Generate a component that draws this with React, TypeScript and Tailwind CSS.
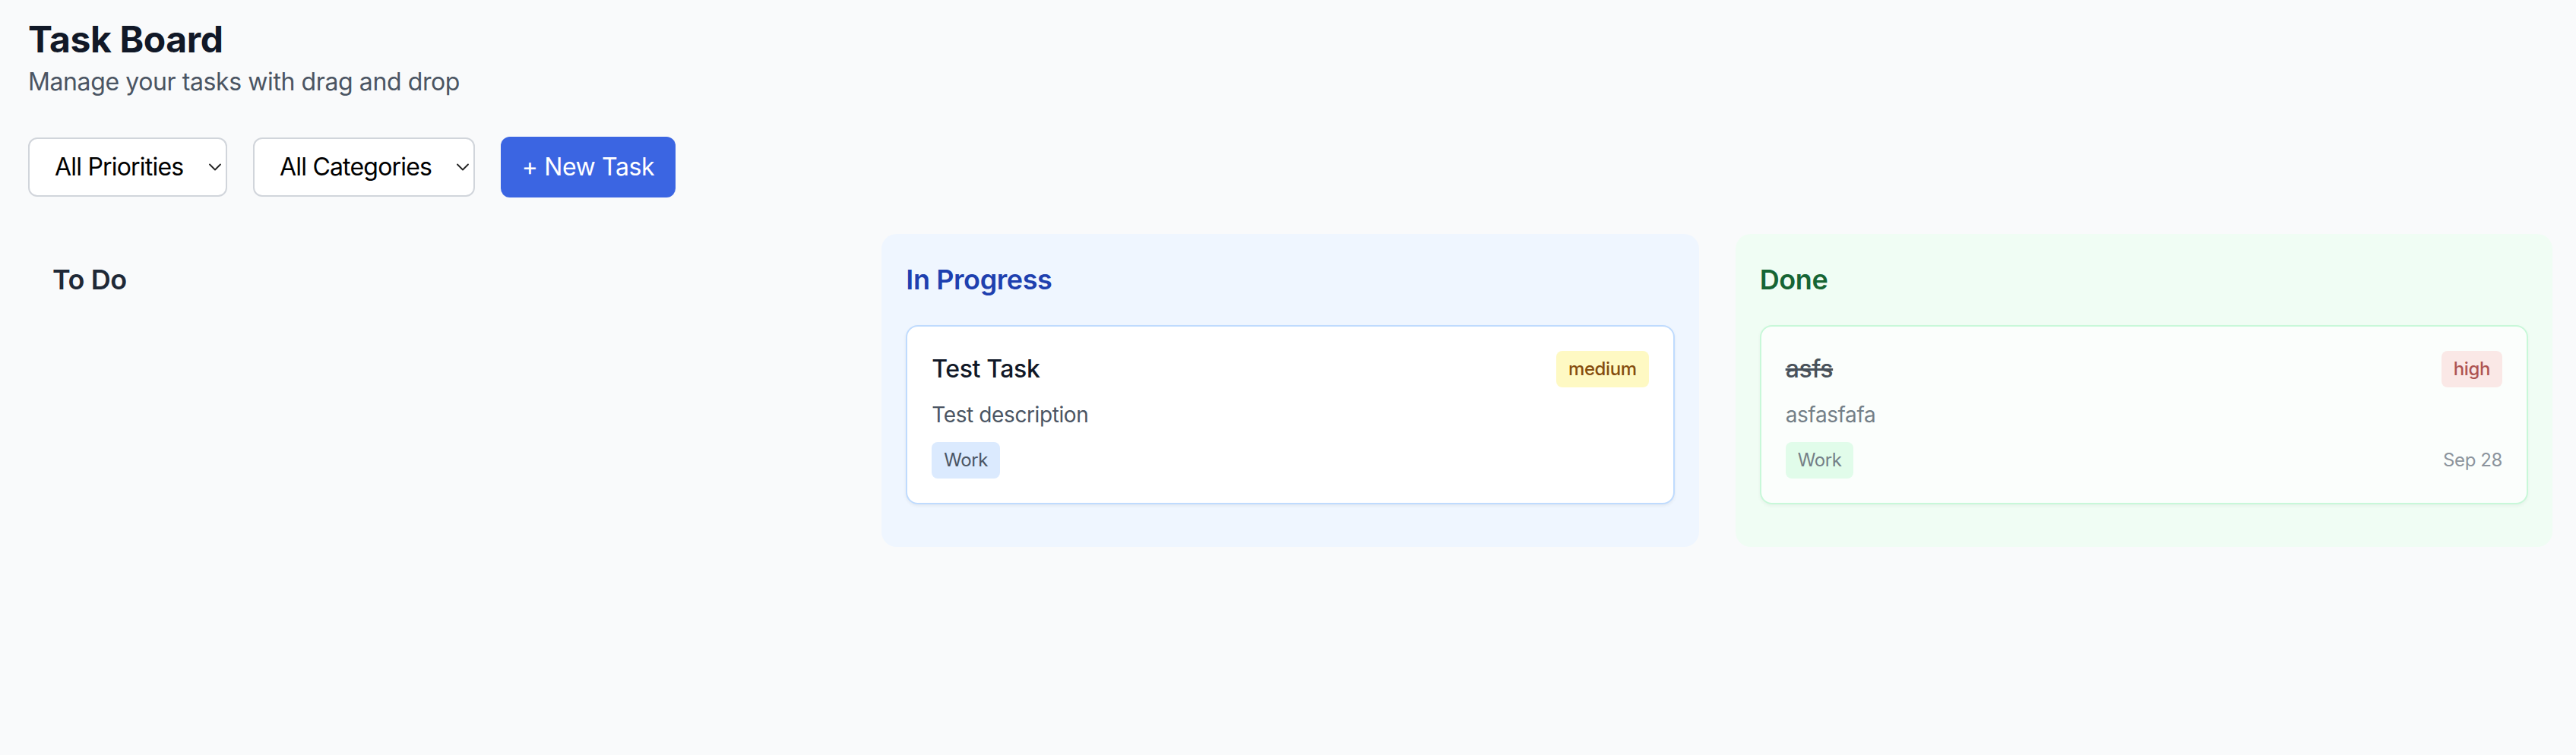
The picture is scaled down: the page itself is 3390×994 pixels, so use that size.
import { ChevronDown } from 'lucide-react';

type Priority = 'low' | 'medium' | 'high';

interface Task {
  id: number;
  title: string;
  description: string;
  priority: Priority;
  category: string;
  status: 'todo' | 'progress' | 'done';
  due?: string;
}

const tasks: Task[] = [
  {
    id: 1,
    title: 'Test Task',
    description: 'Test description',
    priority: 'medium',
    category: 'Work',
    status: 'progress',
  },
  {
    id: 2,
    title: 'asfs',
    description: 'asfasfafa',
    priority: 'high',
    category: 'Work',
    status: 'done',
    due: 'Sep 28',
  },
];

const priorityStyles: Record<Priority, string> = {
  low: 'bg-[#dcfce7] text-[#166534]',
  medium: 'bg-[#fef9c3] text-[#854d0e]',
  high: 'bg-[#fee2e2] text-[#991b1b]',
};

const columns = [
  {
    key: 'todo',
    title: 'To Do',
    panel: 'bg-[#f9fafb]',
    heading: 'text-[#1f2937]',
    card: 'border-[#e5e7eb]',
    tag: 'bg-[#f3f4f6]',
  },
  {
    key: 'progress',
    title: 'In Progress',
    panel: 'bg-[#eff6ff]',
    heading: 'text-[#1e40af]',
    card: 'border-[#bfdbfe]',
    tag: 'bg-[#dbeafe]',
  },
  {
    key: 'done',
    title: 'Done',
    panel: 'bg-[#f0fdf4]',
    heading: 'text-[#166534]',
    card: 'border-[#bbf7d0] opacity-75',
    tag: 'bg-[#dcfce7]',
  },
] as const;

function FilterSelect({ label, width }: { label: string; width: string }) {
  return (
    <div className={`relative ${width}`}>
      <select className="w-full h-[78px] appearance-none bg-white border-2 border-[#d1d5db] rounded-[12px] pl-[33px] pr-[40px] text-[32px] tracking-[-0.025em] text-black outline-none">
        <option>{label}</option>
      </select>
      <ChevronDown
        className="pointer-events-none absolute right-[2px] top-[25px] w-[28px] h-[28px] text-[#222]"
        strokeWidth={1.6}
      />
    </div>
  );
}

export default function App() {
  return (
    <div
      className="min-h-[994px] bg-[#f9fafb] pl-[37px] pr-[31px] pt-[20px] tracking-[-0.025em]"
      style={{ fontFamily: 'Inter, "Noto Sans", sans-serif' }}
    >
      {/* Header */}
      <h1 className="text-[48px] leading-[64px] font-bold text-[#111827]">Task Board</h1>
      <p className="text-[32px] leading-[48px] text-[#4b5563]">Manage your tasks with drag and drop</p>

      {/* Toolbar */}
      <div className="flex items-center gap-[34px] mt-[48px] mb-[48px] h-[80px]">
        <FilterSelect label="All Priorities" width="w-[262px]" />
        <FilterSelect label="All Categories" width="w-[292px]" />
        <button className="h-[80px] w-[230px] rounded-[12px] bg-[#3b65e2] text-white text-[32px] leading-[48px]">
          + New Task
        </button>
      </div>

      {/* Board */}
      <div className="grid grid-cols-3 gap-[48px] items-start">
        {columns.map((col) => (
          <div key={col.key} className={`${col.panel} rounded-[20px] p-[32px]`}>
            <h2 className={`text-[36px] leading-[56px] font-semibold ${col.heading} mb-[32px]`}>
              {col.title}
            </h2>
            <div>
              {tasks
                .filter((t) => t.status === col.key)
                .map((task) => (
                  <div
                    key={task.id}
                    className={`bg-white border-2 ${col.card} rounded-[16px] p-[32px] mb-[24px] shadow-[0_2px_4px_rgba(0,0,0,0.06)]`}
                  >
                    <div className="flex items-start justify-between">
                      <h3
                        className={`text-[32px] leading-[48px] font-medium text-[#111827] ${task.status === 'done' ? 'line-through' : ''}`}
                      >
                        {task.title}
                      </h3>
                      <span
                        className={`px-[16px] py-[8px] rounded-[8px] text-[24px] leading-[32px] font-medium ${priorityStyles[task.priority]}`}
                      >
                        {task.priority}
                      </span>
                    </div>
                    <p className="mt-[16px] text-[28px] leading-[40px] text-[#4b5563]">
                      {task.description}
                    </p>
                    <div className="mt-[16px] flex items-center justify-between">
                      <span
                        className={`px-[16px] py-[8px] rounded-[8px] text-[24px] leading-[32px] text-[#4b5563] ${col.tag}`}
                      >
                        {task.category}
                      </span>
                      {task.due && (
                        <span className="text-[24px] leading-[32px] text-[#6b7280]">{task.due}</span>
                      )}
                    </div>
                  </div>
                ))}
            </div>
          </div>
        ))}
      </div>
    </div>
  );
}
